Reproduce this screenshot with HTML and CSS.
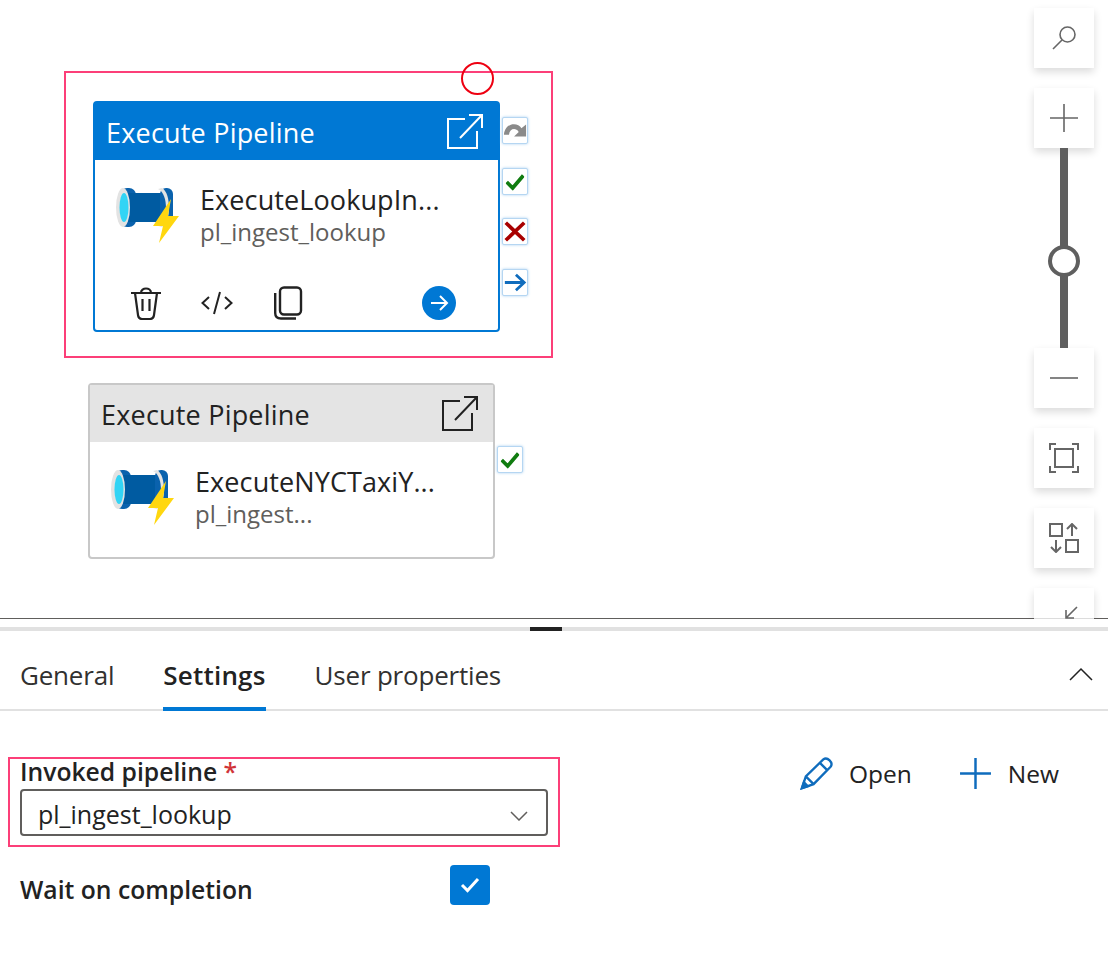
FILE: index.html
```html
<!DOCTYPE html>
<html lang="en">
<head>
  <meta charset="UTF-8" />
  <title>Execute Pipeline settings</title>
  <link rel="stylesheet" href="styles.css">
</head>
<body>

  <!-- shared icons -->
  <svg class="defs" width="0" height="0">
    <symbol id="i-pipe" viewBox="0 0 70 64">
      <rect x="10" y="8" width="16" height="39" rx="7" fill="#0a62ad"/>
      <rect x="18" y="13" width="34" height="29" fill="#005ba1"/>
      <rect x="50" y="8" width="13" height="39" rx="6" fill="#0a62ad"/>
      <path d="M48 9 C54 12 56 20 56 28 C56 36 54 43 48 46 L52 47 C57 44 59 36 59 28 C59 19 57 11 52 8 Z" fill="#e3e3e3"/>
      <ellipse cx="13" cy="27.5" rx="7" ry="19.5" fill="#e3e3e3"/>
      <ellipse cx="14" cy="27.5" rx="4.5" ry="14.5" fill="#32d4f5"/>
      <path d="M61 19 L43 46 L53 46 L49 63 L69 36 L58 36 Z" fill="#ffd70f"/>
    </symbol>
    <symbol id="i-open" viewBox="0 0 38 38">
      <path d="M19 6 H2 V35 H31 V18 M14 25 L36 2 M23 2 H36 V15" fill="none" stroke="currentColor" stroke-width="2"/>
    </symbol>
    <symbol id="i-check" viewBox="0 0 20 20">
      <path d="M1 10.5 L7.5 17 L19 3.5" fill="none" stroke="#107c10" stroke-width="4"/>
    </symbol>
  </svg>

  <div class="canvas">
    <!-- selected activity -->
    <div class="node node-selected">
      <div class="node-head">
        <span class="node-title">Execute Pipeline</span>
        <svg class="head-icon"><use href="#i-open"/></svg>
      </div>
      <div class="node-body">
        <svg class="pipe-icon"><use href="#i-pipe"/></svg>
        <div class="node-text">
          <div class="node-name">ExecuteLookupIn...</div>
          <div class="node-sub">pl_ingest_lookup</div>
        </div>
      </div>
      <div class="node-foot">
        <svg class="foot-icon" viewBox="0 0 32 34" fill="none" stroke="#222" stroke-width="2.2">
          <path d="M1 7 H31 M11 7 C11 1 21 1 21 7 M5 7 L8 29 C8.4 32 10 33 12 33 H20 C22 33 23.6 32 24 29 L27 7 M12.5 13 V25 M19.5 13 V25"/>
        </svg>
        <svg class="foot-icon" viewBox="0 0 32 34" fill="none" stroke="#222" stroke-width="2">
          <path d="M8 11 L1.5 17 L8 23 M24 11 L30.5 17 L24 23 M19 6 L13 28"/>
        </svg>
        <svg class="foot-icon" viewBox="0 0 32 34" fill="none" stroke="#222" stroke-width="2.4">
          <rect x="8" y="1.5" width="21" height="27" rx="4"/>
          <path d="M3.2 7 V27 C3.2 30.5 5 32.5 9 32.5 H24"/>
        </svg>
        <span class="foot-go">
          <svg viewBox="0 0 34 34" fill="none" stroke="#fff" stroke-width="2">
            <path d="M9 17 H25 M18 10 L25 17 L18 24"/>
          </svg>
        </span>
      </div>
      <div class="ports">
        <span class="port">
          <svg viewBox="0 0 26 27"><path d="M1 18 C2 5 16 4 20 11 L25 7 V20 H12 L17 15 C14 10 7 11 6.5 18 Z" fill="#8a8a8a"/></svg>
        </span>
        <span class="port"><svg viewBox="-3 -3.5 26 27"><use href="#i-check" width="20" height="20"/></svg></span>
        <span class="port">
          <svg viewBox="0 0 26 27"><path d="M3 4 L23 23 M23 4 L3 23" fill="none" stroke="#a80000" stroke-width="4"/></svg>
        </span>
        <span class="port">
          <svg viewBox="0 0 26 27"><path d="M2 13.5 H23 M14 5 L23 13.5 L14 22" fill="none" stroke="#0f6cbd" stroke-width="3"/></svg>
        </span>
      </div>
    </div>

    <!-- second activity -->
    <div class="node node-plain">
      <div class="node-head">
        <span class="node-title">Execute Pipeline</span>
        <svg class="head-icon"><use href="#i-open"/></svg>
      </div>
      <div class="node-body">
        <svg class="pipe-icon"><use href="#i-pipe"/></svg>
        <div class="node-text">
          <div class="node-name">ExecuteNYCTaxiY...</div>
          <div class="node-sub">pl_ingest...</div>
        </div>
      </div>
      <div class="ports ports-low">
        <span class="port"><svg viewBox="-3 -3.5 26 27"><use href="#i-check" width="20" height="20"/></svg></span>
      </div>
    </div>

    <!-- annotations -->
    <div class="mark-box"></div>
    <div class="mark-circle"></div>

    <!-- zoom toolbar -->
    <div class="toolbar">
      <button class="tool">
        <svg viewBox="0 0 30 30" fill="none" stroke="#666" stroke-width="1.6"><circle cx="18.5" cy="11.5" r="7.5"/><path d="M13 17 L4 26"/></svg>
      </button>
      <button class="tool tool-gap">
        <svg viewBox="0 0 30 30" fill="none" stroke="#666" stroke-width="1.6"><path d="M15 1 V29 M1 15 H29"/></svg>
      </button>
      <div class="slider"><span class="slider-thumb"></span></div>
      <button class="tool">
        <svg viewBox="0 0 30 30" fill="none" stroke="#666" stroke-width="1.6"><path d="M1 15 H29"/></svg>
      </button>
      <button class="tool tool-gap">
        <svg viewBox="0 0 30 30" fill="none" stroke="#666" stroke-width="2"><rect x="6" y="6" width="18" height="18"/><path d="M1 7 V1 H7 M23 1 H29 V7 M29 23 V29 H23 M7 29 H1 V23"/></svg>
      </button>
      <button class="tool tool-gap">
        <svg viewBox="0 0 30 30" fill="none" stroke="#666" stroke-width="2"><rect x="1" y="1" width="12" height="12"/><rect x="17" y="17" width="12" height="12"/><path d="M23 13 V1 M18 6 L23 1 L28 6 M7 29 V17 M2 24 L7 29 L12 24"/></svg>
      </button>
      <button class="tool tool-gap tool-cut">
        <svg viewBox="0 0 30 30" fill="none" stroke="#666" stroke-width="1.6"><path d="M28 17 L17 28 M17 20 V28 H25"/></svg>
      </button>
    </div>
  </div>

  <div class="panel">
    <div class="resize-bar"><span class="resize-grip"></span></div>

    <div class="tabs">
      <span class="tab">General</span>
      <span class="tab tab-active">Settings</span>
      <span class="tab">User properties</span>
      <svg class="collapse" viewBox="0 0 24 14" fill="none" stroke="#222" stroke-width="1.5"><path d="M1 13 L12 2 L23 13"/></svg>
    </div>

    <div class="form">
      <div class="form-top">
        <div class="field-box">
          <div class="field-label">Invoked pipeline <span class="req">*</span></div>
          <div class="select">
            <span>pl_ingest_lookup</span>
            <svg viewBox="0 0 18 10" fill="none" stroke="#605e5c" stroke-width="1.5"><path d="M1 1 L9 9 L17 1"/></svg>
          </div>
        </div>
        <div class="actions">
          <span class="action">
            <svg viewBox="0 0 34 34" fill="none" stroke="#0f6cbd" stroke-width="2.4"><path d="M2 32 L6 20 L24 2.5 C26 1 28 1 30.5 3.5 C33 6 33 8 31.5 10 L14 28 Z M20.5 6 L28 13.5 M6 20 L14 28"/><path d="M2 32 L4 26 L8 30 Z" fill="#0f6cbd"/></svg>
            Open
          </span>
          <span class="action">
            <svg viewBox="0 0 32 32" fill="none" stroke="#0f6cbd" stroke-width="2.4"><path d="M16 1 V31 M1 16 H31"/></svg>
            New
          </span>
        </div>
      </div>
      <div class="wait-row">
        <span class="field-label wait-label">Wait on completion</span>
        <span class="checkbox">
          <svg viewBox="0 0 20 16" fill="none" stroke="#fff" stroke-width="3"><path d="M2 8 L7.5 13.5 L18 2"/></svg>
        </span>
      </div>
    </div>
  </div>

</body>
</html>
```

FILE: styles.css
```css
* {
  box-sizing: border-box;
}
html, body {
  margin: 0;
  padding: 0;
  height: 966px;
  overflow: hidden;
  background: #fff;
  font-family: "Open Sans", "Noto Sans", sans-serif;
  color: #222;
}
.defs {
  position: absolute;
}

/* Canvas */
.canvas {
  position: relative;
  height: 619px;
  overflow: hidden;
}
.canvas::after {
  content: "";
  position: absolute;
  left: 0;
  right: 0;
  bottom: 0;
  height: 1px;
  background: #605e5c;
}

.node {
  position: absolute;
  width: 407px;
  background: #fff;
  border-radius: 4px;
  display: flex;
  flex-direction: column;
}
.node-selected {
  left: 93px;
  top: 101px;
  height: 231px;
  border: 2px solid #0078d4;
}
.node-plain {
  left: 88px;
  top: 383px;
  height: 176px;
  border: 2px solid #c8c8c8;
}
.node-head {
  height: 57px;
  flex: none;
  display: flex;
  align-items: center;
  justify-content: space-between;
  padding: 0 14px 0 11px;
}
.node-selected .node-head {
  background: #0078d4;
  color: #fff;
}
.node-plain .node-head {
  background: #e4e4e4;
}
.node-title {
  font-size: 27px;
  letter-spacing: 0.2px;
  padding-top: 2px;
}
.head-icon {
  width: 38px;
  height: 38px;
}
.node-body {
  display: flex;
  align-items: flex-start;
  padding: 20px 0 0 15px;
}
.pipe-icon {
  width: 70px;
  height: 64px;
  flex: none;
}
.node-text {
  margin-left: 20px;
  padding-top: 1px;
}
.node-name {
  font-size: 27px;
  line-height: 37px;
  letter-spacing: 0.1px;
}
.node-sub {
  font-size: 24px;
  line-height: 27px;
  color: #605e5c;
}
.node-foot {
  margin-top: auto;
  height: 44px;
  display: flex;
  align-items: flex-start;
  padding: 0 42px 0 35px;
  gap: 39px;
}
.foot-icon {
  width: 32px;
  height: 34px;
}
.foot-go {
  width: 34px;
  height: 34px;
  margin-left: auto;
  border-radius: 50%;
  background: #0078d4;
}
.foot-go svg {
  display: block;
  width: 34px;
  height: 34px;
}

.ports {
  position: absolute;
  left: 100%;
  top: 14px;
  margin-left: 4px;
  display: flex;
  flex-direction: column;
  gap: 23.5px;
}
.ports-low {
  top: 61px;
}
.port {
  width: 26px;
  height: 27px;
  background: #fff;
  border: 1px solid #b5d6f2;
  border-radius: 2px;
  box-shadow: 0 0 3px #a9d0f0;
}
.port svg {
  display: block;
  width: 24px;
  height: 25px;
}

/* Red annotations */
.mark-box {
  position: absolute;
  left: 64px;
  top: 71px;
  width: 489px;
  height: 287px;
  border: 2px solid #fc3f78;
  pointer-events: none;
}
.mark-circle {
  position: absolute;
  left: 461px;
  top: 62px;
  width: 33px;
  height: 33px;
  border: 2px solid #ee0011;
  border-radius: 50%;
}

/* Zoom toolbar */
.toolbar {
  position: absolute;
  z-index: 2;
  right: 14px;
  top: 8px;
  width: 60px;
  display: flex;
  flex-direction: column;
}
.tool {
  width: 60px;
  height: 60px;
  flex: none;
  padding: 0;
  border: none;
  background: #fff;
  box-shadow: 0 4px 8px rgba(0, 0, 0, 0.14);
  display: flex;
  align-items: center;
  justify-content: center;
}
.tool svg {
  width: 30px;
  height: 30px;
}
.tool-gap {
  margin-top: 20px;
}
.tool-cut {
  height: 31px;
  align-items: flex-start;
  padding-top: 2px;
  border-bottom: 1px solid #dcdcdc;
}
.slider {
  position: relative;
  width: 8px;
  height: 200px;
  margin: 0 auto;
  background: #5f5f5f;
}
.slider-thumb {
  position: absolute;
  left: -12px;
  top: 97px;
  width: 32px;
  height: 32px;
  background: #fff;
  border: 4px solid #5f5f5f;
  border-radius: 50%;
}

/* Bottom panel */
.resize-bar {
  position: relative;
  height: 4px;
  margin-top: 8px;
  background: #e1e1e1;
}
.resize-grip {
  position: absolute;
  left: 530px;
  top: 0;
  width: 32px;
  height: 4px;
  background: #222;
}
.tabs {
  height: 80px;
  display: flex;
  align-items: flex-end;
  gap: 49px;
  padding: 0 15px 0 20px;
  border-bottom: 2px solid #e1e1e1;
  font-size: 26px;
}
.tab {
  height: 54px;
  margin-bottom: -2px;
  color: #323130;
  letter-spacing: -0.2px;
}
.tab-active {
  font-weight: 600;
  color: #222;
  letter-spacing: 0.2px;
  border-bottom: 4px solid #0078d4;
}
.collapse {
  width: 24px;
  height: 14px;
  margin-left: auto;
  align-self: flex-start;
  margin-top: 36px;
}

.form {
  padding: 46px 0 0 8px;
}
.form-top {
  display: flex;
  align-items: flex-start;
}
.field-box {
  width: 552px;
  height: 90px;
  padding: 0 10px;
  border: 2px solid #fc3f78;
}
.field-label {
  font-size: 24.7px;
  font-weight: 600;
  line-height: 25px;
  margin-bottom: 5px;
}
.req {
  color: #d13438;
}
.select {
  height: 47px;
  display: flex;
  align-items: center;
  justify-content: space-between;
  padding: 2px 18px 0 16px;
  border: 2px solid #605e5c;
  border-radius: 4px;
  font-size: 25px;
}
.select svg {
  width: 18px;
  height: 10px;
  margin-top: 4px;
}
.actions {
  display: flex;
  margin-left: 240px;
  gap: 47px;
}
.action {
  display: flex;
  align-items: center;
  gap: 16px;
  font-size: 24.5px;
}
.action svg {
  width: 33px;
  height: 33px;
}
.wait-row {
  display: flex;
  align-items: center;
  padding-left: 12px;
  margin-top: 18px;
}
.wait-label {
  width: 430px;
  margin-bottom: 0;
  padding-top: 8px;
  line-height: 23px;
}
.checkbox {
  width: 40px;
  height: 40px;
  border-radius: 4px;
  background: #0078d4;
  display: flex;
  align-items: center;
  justify-content: center;
}
.checkbox svg {
  width: 20px;
  height: 16px;
}
```
